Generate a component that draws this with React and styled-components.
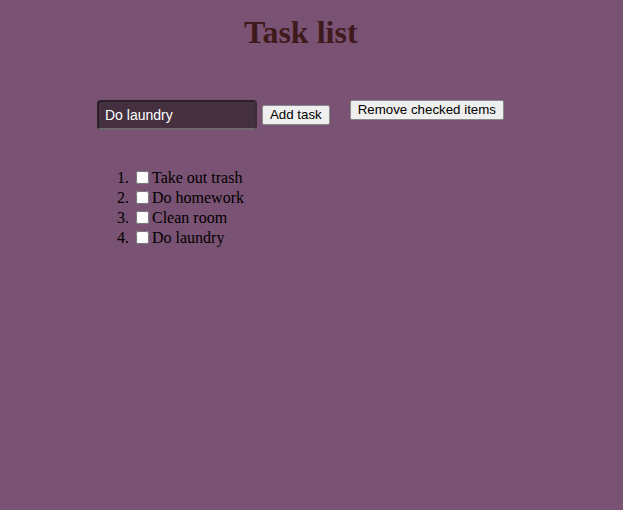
import { useState } from 'react';
import styled, { createGlobalStyle } from 'styled-components';

const GlobalStyle = createGlobalStyle`
  html, body {
    margin: 0;
    background: #7a5273;
  }
  body {
    font-family: 'Liberation Serif', 'Times New Roman', serif;
    font-size: 16px;
  }
`;

const Page = styled.div`
  min-height: 510px;
  padding: 14px 0 0 0;
  box-sizing: border-box;
`;

const Title = styled.h1`
  margin: 0 0 0 244px;
  font-size: 32px;
  line-height: 36px;
  font-weight: bold;
  color: #3f1a1c;
`;

const Controls = styled.div`
  display: flex;
  align-items: flex-start;
  margin: 50px 0 0 97px;
`;

const AddForm = styled.form`
  display: flex;
  align-items: center;
  gap: 5px;
`;

const TaskInput = styled.input`
  box-sizing: border-box;
  width: 160px;
  height: 30px;
  padding: 0 6px;
  border: 2px solid;
  border-color: #2b2029 #3a2e37 #6c686b #2b2029;
  border-radius: 4px;
  background: #44303f;
  color: #ffffff;
  font-family: 'Liberation Sans', Arial, sans-serif;
  font-size: 14px;
  outline: none;
`;

const Button = styled.button`
  box-sizing: border-box;
  height: 20px;
  padding: 0 7px;
  border: 1px solid #8a8a8a;
  border-radius: 2px;
  background: #efefef;
  color: #000;
  font-family: 'Liberation Sans', Arial, sans-serif;
  font-size: 13.3px;
  line-height: 18px;
  cursor: pointer;
  margin-left: ${(p) => p.$offset || 0}px;
`;

const List = styled.ol`
  margin: 38px 0 0 0;
  padding-left: 133px;
  color: #000;
  li {
    line-height: 20px;
  }
`;

const Check = styled.input`
  width: 13px;
  height: 13px;
  margin: 0 3px 0 3px;
  vertical-align: -1px;
`;

export default function App() {
  const [text, setText] = useState('Do laundry');
  const [tasks, setTasks] = useState([
    { name: 'Take out trash', done: false },
    { name: 'Do homework', done: false },
    { name: 'Clean room', done: false },
    { name: 'Do laundry', done: false },
  ]);

  function addTask(e) {
    e.preventDefault();
    if (!text.trim()) return;
    setTasks([...tasks, { name: text, done: false }]);
  }

  function toggle(i) {
    setTasks(tasks.map((t, j) => (j === i ? { ...t, done: !t.done } : t)));
  }

  return (
    <Page>
      <GlobalStyle />
      <Title>Task list</Title>
      <Controls>
        <AddForm onSubmit={addTask}>
          <TaskInput value={text} onChange={(e) => setText(e.target.value)} />
          <Button type="submit">Add task</Button>
        </AddForm>
        <Button $offset={20} onClick={() => setTasks(tasks.filter((t) => !t.done))}>
          Remove checked items
        </Button>
      </Controls>
      <List>
        {tasks.map((t, i) => (
          <li key={i}>
            <Check type="checkbox" checked={t.done} onChange={() => toggle(i)} />
            {t.name}
          </li>
        ))}
      </List>
    </Page>
  );
}
